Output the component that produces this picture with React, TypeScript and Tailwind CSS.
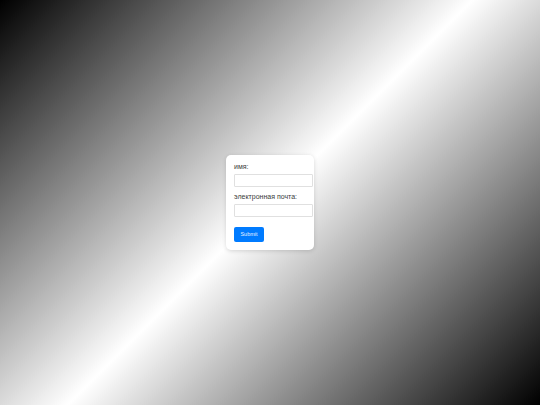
import React from 'react';

export default function App() {
  return (
    <div className="h-screen w-full flex items-center justify-center bg-[linear-gradient(135deg,#000,#fff,#000)] font-['Liberation_Sans',Arial,sans-serif]">
      {/* Form card */}
      <form
        className="w-[88px] bg-white rounded-[5px] shadow-[0_1px_4px_rgba(0,0,0,0.15)] pt-[8px] pb-[8px] pl-[8px]"
        onSubmit={(e) => e.preventDefault()}
      >
        <label className="block text-[7px] leading-[8px] text-[#3a3a3a] mb-[3px] antialiased">имя:</label>
        <input
          type="text"
          className="block w-[79px] h-[13px] border border-[#e0e0e0] rounded-[1px] bg-white mb-[6px] outline-none"
        />
        <label className="block text-[7px] leading-[8px] text-[#3a3a3a] mb-[3px] antialiased">электронная почта:</label>
        <input
          type="email"
          className="block w-[79px] h-[13px] border border-[#e0e0e0] rounded-[1px] bg-white mb-[10px] outline-none"
        />
        <button
          type="submit"
          className="block w-[30px] h-[15px] rounded-[2px] bg-[#007bff] text-[#e6f0ff] text-[5.5px] leading-[15px] text-center antialiased"
        >
          Submit
        </button>
      </form>
    </div>
  );
}
